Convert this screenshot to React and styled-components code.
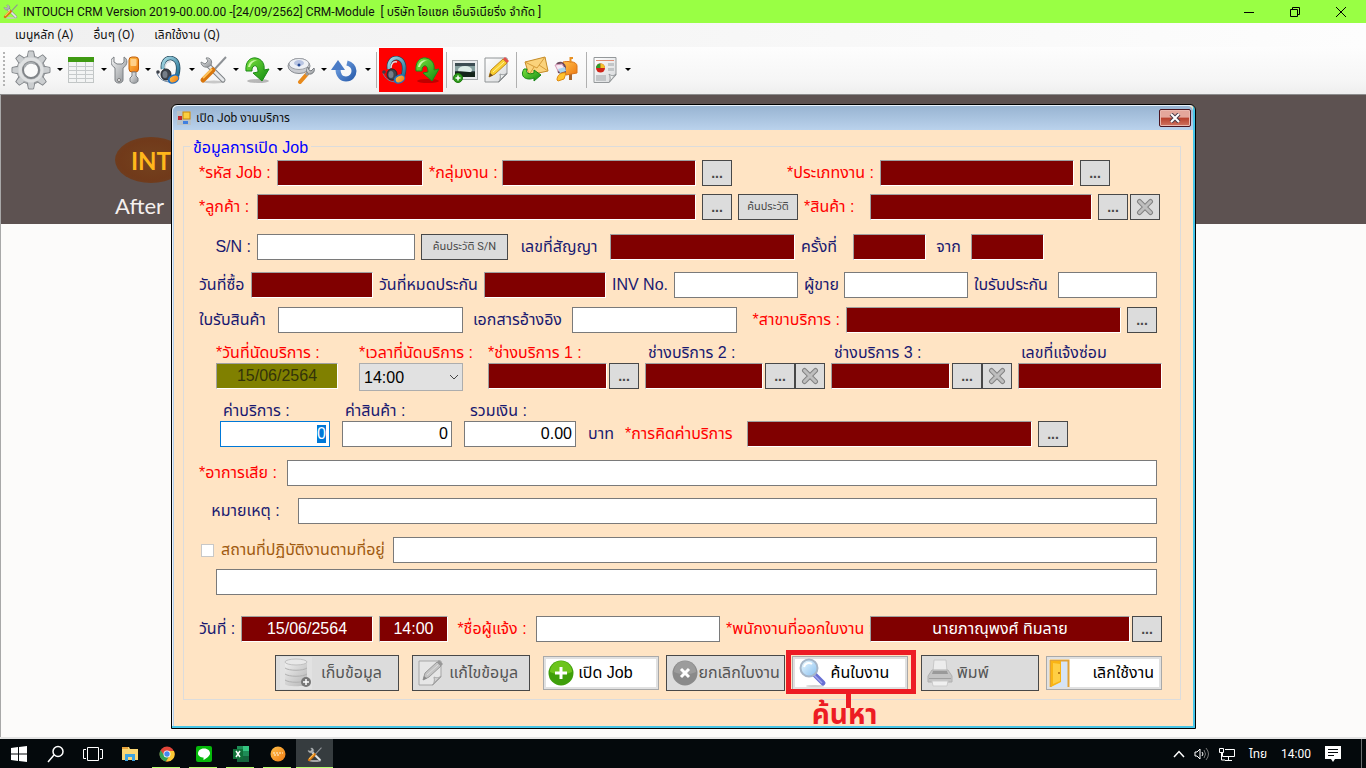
import React, { useEffect, useRef } from "react"
import styled, { createGlobalStyle, css } from "styled-components"

const GlobalStyle = createGlobalStyle`
  * { box-sizing: border-box; }
  body { margin: 0; background: #fcfbfa; font-family: "Liberation Sans", "Noto Sans Thai", sans-serif; }
  button, input, select { font: inherit; margin: 0; }
`

const uiFont = `Roboto, "Noto Sans Thai", sans-serif`

//---------------------------------------------------------
// main window

const Screen = styled.div`
  min-height: 100vh;
  display: flex;
  flex-direction: column;
`

const TitleBar = styled.header`
  display: flex;
  align-items: center;
  height: 23px;
  padding: 0 8px 0 3px;
  background: #99ff44;
  font-family: ${uiFont};
  font-size: 12px;
  color: #101010;
`

const TitleText = styled.h1`
  flex: 1;
  margin: 0 0 0 5px;
  font-size: 12px;
  font-weight: 400;
  white-space: pre;
`

const CaptionButton = styled.button`
  display: grid;
  place-items: center;
  width: 34px;
  height: 22px;
  margin-left: 12px;
  padding: 0;
  border: 0;
  background: none;
`

const MenuBar = styled.nav`
  display: flex;
  align-items: center;
  gap: 20px;
  height: 24px;
  padding: 0 15px;
  background: linear-gradient(90deg, #f0f0f0, #fdfdfd);
  font-family: ${uiFont};
  font-size: 12px;
`

const MenuLink = styled.a`
  color: #111;
  text-decoration: none;
  white-space: nowrap;
`

const ToolBar = styled.div`
  display: flex;
  align-items: center;
  height: 48px;
  padding: 0 0 2px 3px;
  background: linear-gradient(#fdfdfd, #f6f6f6 70%, #eeeeee);
  border-bottom: 1px solid #8c8c8c;
`

const Grip = styled.span`
  width: 2px;
  height: 36px;
  margin-right: 4px;
  background: repeating-linear-gradient(#b4b4b4 0 2px, transparent 2px 4px);
`

const Tool = styled.button`
  display: flex;
  align-items: center;
  justify-content: center;
  width: ${p => (p.$big ? 44 : 32)}px;
  height: 44px;
  padding: 0;
  border: 0;
  background: none;
`

const DropArrow = styled.button`
  width: 12px;
  height: 44px;
  padding: 0 3px 0 4px;
  border: 0;
  background: none;
  &::after {
    content: "";
    display: block;
    border: solid transparent;
    border-width: 3px 3px 0;
    border-top-color: #000;
  }
`

const ToolSep = styled.span`
  width: 6px;
  height: 36px;
  border-right: 1px solid #b0b0b0;
  margin-left: -2px;
  margin-right: 2px;
`

const HotTools = styled.div`
  display: flex;
  background: #ff0000;
`

const Workspace = styled.main`
  position: relative;
  flex: 1;
  padding: 9px 170px 8px 171px;
  background: linear-gradient(#5d5251 129px, #fcfbfa 129px);
  border-bottom: 2px solid #e4e4e4;
  box-shadow: inset 1px 0 0 #a8a8a8;
`

const Brand = styled.div`
  position: absolute;
  left: 115px;
  top: 42px;
  color: #f5f0ee;
  font-family: Lato, sans-serif;
  font-size: 22px;
`

const BrandMark = styled.div`
  display: grid;
  align-items: center;
  width: 72px;
  height: 46px;
  margin-bottom: 9px;
  padding-left: 16px;
  border-radius: 50%;
  background: radial-gradient(#74431f, #713a1a 60%, #674228);
  color: #ffb71b;
  font-size: 24px;
  font-weight: 700;
`

//---------------------------------------------------------
// dialog

const Dialog = styled.section`
  position: relative;
  border: 1px solid #000;
  border-radius: 6px 6px 0 0;
  background: #ffe4c4;
  box-shadow: inset -2px -2px 0 #45c5e8, inset 1px 1px 0 #e8f2fc, inset 2px 0 0 #b7d0ea;
`

const DialogTitle = styled.header`
  display: flex;
  align-items: center;
  height: 24px;
  margin: 1px 2px 0 1px;
  padding: 0 2px 0 4px;
  border-radius: 5px 5px 0 0;
  background: linear-gradient(#98b4d2, #bad2ec);
  font-family: ${uiFont};
`

const DialogName = styled.h2`
  flex: 1;
  margin: 0 0 0 5px;
  font-size: 12px;
  font-weight: 400;
  color: #101010;
`

const CloseButton = styled.button`
  display: grid;
  place-items: center;
  width: 32px;
  height: 18px;
  padding: 0;
  border: 1px solid #4a1420;
  border-radius: 2px;
  background: linear-gradient(#e4a79b 45%, #b8402c 50%, #cf7461);
  box-shadow: inset 0 0 0 1px #eab8ae;
`

const Group = styled.form`
  position: relative;
  margin: 16px 14px 28px 11px;
  padding-top: 13px;
  padding-bottom: 8px;
  border: 1px solid #dcdcdc;
`

const GroupTitle = styled.h3`
  position: absolute;
  left: 6px;
  top: -9px;
  margin: 0;
  padding: 0 3px;
  background: #ffe4c4;
  color: #0000ff;
  font-size: 16px;
  font-weight: 400;
  line-height: 20px;
`

const Row = styled.div`
  display: grid;
  grid-template-columns: ${p => p.$cols.map(c => `minmax(0, ${c}fr)`).join(" ")};
  column-gap: ${p => p.$gap || 6}px;
  align-items: ${p => p.$align || "center"};
  margin-top: ${p => p.$top || 0}px;
  padding-left: ${p => p.$indent || 15}px;
  padding-right: ${p => (p.$wide ? 18 : 23)}px;
`

const Label = styled.label`
  display: block;
  color: ${p => (p.$req ? "#ff0000" : "#191970")};
  font-size: 16px;
  line-height: 20px;
  text-align: ${p => p.$align || "left"};
  white-space: nowrap;
`

const InlineLabel = styled(Label)`
  line-height: 26px;
`

const CheckLabel = styled(Label)`
  display: flex;
  align-items: center;
  gap: 7px;
  padding-left: 2px;
  color: #a05a10;
`

const CheckBox = styled.input`
  appearance: none;
  width: 13px;
  height: 13px;
  border: 1px solid #c8c8c8;
  background: #fff;
`

const Field = styled.input`
  display: block;
  width: 100%;
  min-width: 0;
  height: 26px;
  padding: 0 3px;
  border: 1px solid #7a7a7a;
  border-radius: 0;
  background: #fff;
  color: #000;
  font-size: 16px;
  outline: 0;
  text-align: ${p => p.$align || "left"};
  &:focus { border-color: #0078d7; }
  &::selection { background: #0078d7; color: #fff; }
`

const LockedField = styled(Field)`
  border-color: #a0a0a0 #fff #fff #a0a0a0;
  background: ${p => (p.$olive ? "#808000" : "#800000")};
  color: ${p => (p.$olive ? "#33330a" : "#fff")};
  text-align: center;
`

const Picker = styled.div`
  display: flex;
  gap: ${p => (p.$gap ?? 2)}px;
`

const Stack = styled.div`
  display: flex;
  flex-direction: column;
  grid-column: ${p => p.$at || "auto"};
`

const StackLabel = styled(Label)`
  padding-left: ${p => p.$pad || 0}px;
`

const SelectWrap = styled.div`
  position: relative;
  svg { position: absolute; right: 4px; top: 10px; pointer-events: none; }
`

const Select = styled.select`
  display: block;
  appearance: none;
  width: 100%;
  height: 28px;
  padding: 0 4px;
  border: 1px solid #adadad;
  border-radius: 0;
  background: #e1e1e1;
  color: #000;
  font-size: 16px;
`

const SmallButton = styled.button`
  display: grid;
  place-items: center;
  flex: none;
  width: ${p => (p.$fill ? "100%" : "30px")};
  height: 26px;
  padding: 0;
  border: 1px solid #484848;
  background: #dcdcdc;
  color: #484848;
  font-size: ${p => (p.$fill ? 11 : 14)}px;
  font-weight: ${p => (p.$fill ? 400 : 700)};
  font-family: ${p => (p.$fill ? uiFont : "inherit")};
  line-height: 16px;
  white-space: nowrap;
`

const Actions = styled.div`
  display: grid;
  flex: 1;
  grid-template-columns: ${p => p.$cols.map(c => `minmax(0, ${c}fr)`).join(" ")};
  column-gap: 7px;
  align-items: center;
`

const enabled = css`
  height: 34px;
  border: 1px solid #a9a9a9;
  background: #fff;
  box-shadow: inset 0 0 0 2px #e1e1e1;
  color: #000;
`

const ActionButton = styled.button`
  display: flex;
  align-items: center;
  justify-content: ${p => p.$spread || "flex-start"};
  gap: ${p => p.$gap ?? 4}px;
  width: 100%;
  height: 36px;
  padding: 0 7px 0 ${p => p.$pad || 4}px;
  border: 1px solid #484848;
  background: #dcdcdc;
  color: #555;
  font-size: 16px;
  white-space: nowrap;
  ${p => p.$on && enabled}
  svg { flex: none; }
`

const Marked = styled.div`
  position: relative;
`

const MarkFrame = styled.div`
  position: absolute;
  inset: -6px -8px -4px -6px;
  border: 5px solid #ed1c24;
  pointer-events: none;
`

const MarkNote = styled.div`
  position: absolute;
  left: 0;
  right: 10px;
  top: 38px;
  padding-top: 4px;
  color: #ed1c24;
  font-size: 28px;
  font-weight: 700;
  line-height: 34px;
  text-align: center;
  pointer-events: none;
  &::before {
    content: "";
    position: absolute;
    left: 54px;
    top: 0;
    width: 5px;
    height: 14px;
    background: #ed1c24;
  }
`

//---------------------------------------------------------
// task bar

const TaskBar = styled.footer`
  display: flex;
  align-items: stretch;
  height: 30px;
  background: #04090c;
  color: #fff;
`

const Task = styled.button`
  display: grid;
  place-items: center;
  width: 37px;
  padding: 0;
  border: 0;
  background: ${p => (p.$active ? "#363c3f" : "none")};
  position: relative;
  &::after {
    content: "";
    display: ${p => (p.$running ? "block" : "none")};
    position: absolute;
    left: ${p => (p.$active ? 0 : 4)}px;
    right: ${p => (p.$active ? 0 : 5)}px;
    bottom: 0;
    height: 2px;
    background: #b4ff6e;
  }
`

const Tray = styled.div`
  display: flex;
  align-items: center;
  gap: 14px;
  margin-left: auto;
  padding-right: 4px;
  font-family: ${uiFont};
  font-size: 12px;
  white-space: nowrap;
`

const TrayIcons = styled.span`
  display: flex;
  align-items: center;
  gap: 9px;
`

const TrayEnd = styled.span`
  align-self: stretch;
  margin-left: 6px;
  border-left: 1px solid #6a6e70;
`

//---------------------------------------------------------
// icons

function Gradients() {
  const list = [
    ["gSteel", "#f4f4f4", "#8b8f93"],
    ["gGreen", "#7be33c", "#118a12"],
    ["gOrange", "#ffc04a", "#ef7a12"],
    ["gBlue", "#6f9fe0", "#2c5fae"],
    ["gBand", "#a9dbe6", "#1f6f94"],
    ["gGrey", "#efefef", "#b5b5b5"],
    ["gGlass", "#f0fbff", "#86bff0"],
    ["gPaper", "#ffffff", "#d6d8da"],
  ]
  return (
    <svg width="0" height="0" style={{ position: "absolute" }} aria-hidden="true">
      <defs>
        {list.map(([id, a, b]) => (
          <linearGradient key={id} id={id} x1="0" y1="0" x2="1" y2="1">
            <stop offset="0" stopColor={a} />
            <stop offset="1" stopColor={b} />
          </linearGradient>
        ))}
      </defs>
    </svg>
  )
}

function Icon({ size = 28, children }) {
  return <svg width={size} height={size} viewBox="0 0 28 28" aria-hidden="true">{children}</svg>
}

function GearIcon() {
  const teeth = [0, 45, 90, 135, 180, 225, 270, 315]
  return (
    <svg width="40" height="40" viewBox="0 0 40 40" aria-hidden="true">
      <g fill="url(#gSteel)" stroke="#85898d" strokeWidth="1">
        {teeth.map(a => <path key={a} d="M16 8 L17.5 1 H22.500 L24 8 Z" transform={`rotate(${a} 20 20)`} />)}
        <circle cx="20" cy="20" r="14" />
      </g>
      {teeth.map(a => <path key={a} d="M16.500 9.500 L18 2 H22 L23.500 9.500 Z" fill="#cbced0" transform={`rotate(${a} 20 20)`} />)}
      <circle cx="20" cy="20" r="11" fill="none" stroke="#dfe1e2" strokeWidth="3" />
      <circle cx="20" cy="20" r="8" fill="#fafafa" stroke="#808488" strokeWidth="2" />
      <path d="M13.500 17 A7 7 0 0 1 24 14" fill="none" stroke="#a9adb0" strokeWidth="2" />
    </svg>
  )
}

const TableIcon = () => (
  <Icon>
    <rect x="1.500" y="1.500" width="25" height="25" fill="#f3f4f4" stroke="#c2c6c6" />
    <rect x="1" y="1" width="26" height="5" fill="#3f9a12" />
    <path d="M1 10.500H27M1 14.500H27M1 18.500H27M1 22.500H27M9.500 6V27M18.500 6V27" stroke="#c6cacb" fill="none" />
  </Icon>
)

const WrenchDriverIcon = () => (
  <Icon>
    <path d="M3 1 C-1 3 -1 9 4 12 V24 C4 28 12 28 12 24 V12 C17 9 17 3 13 1 V6 L11 8 H6 L3 6 Z" fill="url(#gSteel)" stroke="#7c8084" />
    <circle cx="8" cy="24" r="1.500" fill="#fff" stroke="#777" />
    <rect x="18" y="1" width="9.500" height="15" rx="3" fill="url(#gOrange)" stroke="#c05c08" />
    <rect x="19.500" y="3" width="6" height="7" rx="1" fill="#ffd08a" />
    <path d="M21 16H25V20L27 22V25C26 28 20 28 19 25V22L21 20Z" fill="url(#gSteel)" stroke="#7c8084" />
  </Icon>
)

const HeadsetIcon = () => (
  <Icon>
    <path d="M8 13 C7 6 11 1.500 16 2 C22 3 25 9 22 20" fill="none" stroke="#24475a" strokeWidth="4.500" />
    <path d="M8 13 C7 6 11 1.500 16 2 C22 3 25 9 22 20" fill="none" stroke="url(#gBand)" strokeWidth="3" />
    <path d="M10 12 C10 7 13 5 16 6" fill="none" stroke="#d8dee2" strokeWidth="1.500" />
    <path d="M2 17 C4 23 9 26 16 26" fill="none" stroke="#6b8299" />
    <circle cx="3" cy="16" r="1.800" fill="#3b3f48" />
    <ellipse cx="11" cy="18.500" rx="5" ry="5.500" fill="#3f444c" stroke="#22262c" />
    <ellipse cx="10" cy="18.500" rx="2.500" ry="3.500" fill="#767e88" />
    <ellipse cx="18.500" cy="23" rx="6" ry="4.500" fill="#1f6fc0" transform="rotate(-25 18.500 23)" />
    <ellipse cx="19" cy="23" rx="4.500" ry="3" fill="url(#gOrange)" transform="rotate(-25 19 23)" />
  </Icon>
)

const CrossToolsIcon = ({ size }) => (
  <Icon size={size}>
    <ellipse cx="15" cy="26" rx="11" ry="1.500" fill="#c8c8c8" />
    <path d="M9 9 L24 24" stroke="#7d8184" strokeWidth="5" strokeLinecap="round" />
    <path d="M9 9 L24 24" stroke="#e6e8ea" strokeWidth="3" strokeLinecap="round" />
    <path d="M2 6 C2 11 8 13 12 9 C14 5 11 1 7 2 L9 5 L6 8 Z" fill="url(#gSteel)" stroke="#84888b" />
    <path d="M27 1 L14 15" stroke="#8e9296" strokeWidth="2" />
    <path d="M14 14 L4 24" stroke="#d9760c" strokeWidth="5" strokeLinecap="round" />
    <path d="M13 13 L4 22" stroke="#ffc45c" strokeWidth="2" />
  </Icon>
)

const GreenArrowIcon = () => (
  <Icon>
    <ellipse cx="15" cy="25" rx="11" ry="2" fill="#000" opacity="0.25" />
    <path d="M3 15 C2 6 7 1 13 2 C19 3 22 8 21 14 L26 13 L19 25 L10 17 L15 16 C15 11 13 9 11 10 C9 11 9 13 9 15 Z" fill="url(#gGreen)" stroke="#1a8a16" />
    <path d="M5 11 C6 5 11 3 15 5 C12 4 8 7 7 11 Z" fill="#c9f7a4" />
  </Icon>
)

const InspectIcon = () => (
  <Icon>
    <ellipse cx="12" cy="10" rx="11" ry="7.500" fill="#c9cbd0" stroke="#888c92" />
    <ellipse cx="12" cy="8" rx="10" ry="5.500" fill="#eef0f5" stroke="#9fa2a8" />
    <ellipse cx="12" cy="7" rx="5" ry="3" fill="#b8c4e2" />
    <circle cx="12" cy="9" r="1.500" fill="#264a96" />
    <path d="M13 26 L20 18" stroke="#e88a1c" strokeWidth="4" strokeLinecap="round" />
    <path d="M19 19 L22 16" stroke="#9a9ea2" strokeWidth="3" />
    <path d="M21 11 C18 14 20 19 24 18 C27 17 28 14 27 12 L24 15 L22 14 Z" fill="url(#gSteel)" stroke="#777b80" />
  </Icon>
)

const SyncIcon = () => (
  <Icon>
    <path d="M7 13 C7 20 11 23 15 23 C20 23 23 19 23 15 C23 11 20 8 16 7" fill="none" stroke="url(#gBlue)" strokeWidth="5" />
    <path d="M0 14 L7 4 L14 14 Z" fill="#4a7bc6" />
  </Icon>
)

const PictureIcon = () => (
  <Icon>
    <rect x="1.500" y="4.500" width="25" height="19" fill="#e9ebec" stroke="#a5a8aa" />
    <rect x="4" y="7" width="20" height="14" fill="#3c4c52" />
    <path d="M4 10H24V15H4Z" fill="#86a09f" />
    <ellipse cx="14" cy="14" rx="7" ry="4" fill="#dcebe6" />
    <path d="M4 16C10 14 18 17 24 16V21H4Z" fill="#14241a" />
    <circle cx="7" cy="22" r="4.500" fill="#2f9c1c" stroke="#1f7a10" />
    <path d="M7 19.500V24.500M4.500 22H9.500" stroke="#fff" strokeWidth="1.500" />
  </Icon>
)

const NoteIcon = ({ grey }) => (
  <Icon>
    <path d="M2 2H24V18L16 26H2Z" fill={grey ? "#e6e6e6" : "url(#gPaper)"} stroke={grey ? "#a6a6a6" : "#909496"} />
    <path d="M24 17C21 20 17 18 17 18C18 22 17 25 15 26Z" fill={grey ? "#d0d0d0" : "#eceeee"} stroke={grey ? "#a6a6a6" : "#909496"} />
    <path d="M6 21 L8 14 L20 3 L24 7 L12 18 Z" fill={grey ? "#c4c4c4" : "#f8cf31"} stroke={grey ? "#999" : "#c38a15"} />
    <path d="M20 3L22 1L26 5L24 7Z" fill={grey ? "#989898" : "#e2524e"} />
    <path d="M6 21L7 17L10 19.500Z" fill={grey ? "#888" : "#6c4a20"} />
    <path d="M10 16L21 6" stroke={grey ? "#dedede" : "#fff0a0"} />
  </Icon>
)

const MailIcon = () => (
  <Icon>
    <path d="M4 6 L24 1 L27 15 L8 19 Z" fill="#fbd37b" stroke="#c48a25" />
    <path d="M4 6 L16 12 L24 1 M8 19 L13 11 M27 15 L18 9" fill="none" stroke="#d59b38" />
    <path d="M3 13 C-2 21 6 25 13 22 V25 L20 19 L13 14 V17 C8 19 4 17 6 13 Z" fill="url(#gGreen)" stroke="#168414" />
  </Icon>
)

const MailboxIcon = () => (
  <Icon>
    <path d="M16 16V24H19V16Z" fill="#a8662c" />
    <path d="M10 6 C14 5 24 5 24 10 V17 L13 19 Z" fill="url(#gOrange)" stroke="#d8741a" />
    <path d="M3 8 C6 4 12 6 13 11 V19 L5 17 Z" fill="#6b4a5c" />
    <path d="M2 9 L9 8 L12 13 L5 15 Z" fill="#f6eaf4" stroke="#d59ab8" />
    <path d="M5 13L12 11L13 15L7 17Z" fill="#a8d4ee" />
    <path d="M4 24 C4 19 8 16 13 17 L11 23 L5 25 Z" fill="#ffc42e" stroke="#df8a12" />
    <path d="M17.500 7V2H20" stroke="#e79022" strokeWidth="2" fill="none" />
  </Icon>
)

const ReportIcon = () => (
  <Icon>
    <path d="M3 1.500H25V19L18 26.500H3Z" fill="url(#gPaper)" stroke="#94989a" />
    <path d="M25 18C22 21 19 19 18 18C20 22 19 25 18 26.500Z" fill="#eef0f0" stroke="#94989a" />
    <path d="M5 4.500H23" stroke="#e08c74" />
    <circle cx="9.500" cy="12" r="4.500" fill="#cf2418" />
    <path d="M9.500 12V7.500A4.500 4.500 0 0 0 5 12Z" fill="#2f9e28" />
    <path d="M9.500 12H14A4.500 4.500 0 0 0 9.500 7.500Z" fill="#f2c22c" />
    <path d="M17 7H23V10H17ZM17 12H23V15H17ZM5 19H15V25H5Z" fill="#c2c5c7" />
  </Icon>
)

const XIcon = () => (
  <svg width="18" height="18" viewBox="0 0 18 18" aria-hidden="true">
    <path d="M3.500 3.500 L14.500 14.500 M14.500 3.500 L3.500 14.500" stroke="#828282" strokeWidth="5" strokeLinecap="round" />
    <path d="M3.500 3.500 L14.500 14.500 M14.500 3.500 L3.500 14.500" stroke="#bebebe" strokeWidth="3" strokeLinecap="round" />
  </svg>
)

const DatabaseIcon = () => (
  <svg width="32" height="32" viewBox="0 0 32 32" aria-hidden="true">
    <rect width="32" height="32" fill="#e2e2e2" />
    <path d="M5 5V27C5 30 27 30 27 27V5Z" fill="url(#gGrey)" />
    <path d="M5 11C9 14 23 14 27 11M5 17C9 20 23 20 27 17M5 23C9 26 23 26 27 23" fill="none" stroke="#b0b0b0" />
    <ellipse cx="16" cy="5" rx="11" ry="3" fill="#e8e8e8" stroke="#c0c0c0" />
    <circle cx="26" cy="25" r="5" fill="#767676" />
    <path d="M26 22V28M23 25H29" stroke="#fff" strokeWidth="1.500" />
  </svg>
)

const RoundIcon = ({ grey }) => (
  <svg width="26" height="26" viewBox="0 0 26 26" aria-hidden="true">
    <circle cx="13" cy="13" r="12.500" fill={grey ? "#8a8a8a" : "#3f9f0a"} />
    <path d="M2 12A11 11 0 0 1 24 12C17 15 9 15 2 12Z" fill={grey ? "#9c9c9c" : "#6cc41c"} />
    {grey
      ? <path d="M9 9L17 17M17 9L9 17" stroke="#fff" strokeWidth="3" />
      : <path d="M13 7V19M7 13H19" stroke="#fff" strokeWidth="3" />}
  </svg>
)

const SearchDocIcon = () => (
  <svg width="28" height="30" viewBox="0 0 28 30" aria-hidden="true">
    <ellipse cx="16" cy="28" rx="9" ry="1" fill="#d2d2d2" />
    <path d="M16 17L24 25" stroke="#6870d4" strokeWidth="5" strokeLinecap="round" />
    <path d="M15 17L23 25" stroke="#a2a8ee" strokeWidth="1.500" />
    <circle cx="10" cy="10" r="8.500" fill="url(#gGlass)" stroke="#a6b6c8" strokeWidth="2" />
    <path d="M5 9C6 5 10 4 13 6" stroke="#fff" strokeWidth="2" fill="none" />
  </svg>
)

const PrinterIcon = () => (
  <svg width="26" height="28" viewBox="0 0 26 28" aria-hidden="true">
    <path d="M7 1H19L20 12H6Z" fill="#ececec" stroke="#c8c8c8" />
    <path d="M5 11H21L25 17V23H1V17Z" fill="#c4c4c4" stroke="#b0b0b0" />
    <path d="M6 12H20L21 15H5Z" fill="#9a9a9a" />
    <path d="M2 19H24V20H2Z" fill="#a0a0a0" />
    <path d="M5 22H21L20 27H6Z" fill="#f0f0f0" stroke="#cccccc" />
  </svg>
)

const DoorIcon = () => (
  <svg width="22" height="28" viewBox="0 0 22 28" aria-hidden="true">
    <path d="M1.500 28V1.500H19.500V28" fill="#d6e4f6" stroke="#e0a238" strokeWidth="2" />
    <path d="M2 2H12V23L2 28Z" fill="#f9b414" />
    <path d="M4 4L11 5V22L4 25Z" fill="#ffcf45" />
    <circle cx="10" cy="14" r="1" fill="#a8640c" />
  </svg>
)

const FormIcon = () => (
  <svg width="14" height="14" viewBox="0 0 14 14" aria-hidden="true">
    <rect width="14" height="14" fill="#b9c2c9" />
    <rect x="6" y="1" width="7" height="7" fill="#fbcf3f" stroke="#c8880c" />
    <rect x="1" y="5" width="4" height="4" fill="#c1272d" />
    <rect x="6" y="10" width="5" height="3" fill="#3f7fe0" />
  </svg>
)

const Chevron = () => (
  <svg width="10" height="8" viewBox="0 0 10 8" aria-hidden="true">
    <path d="M1 2L5 6L9 2" fill="none" stroke="#444" />
  </svg>
)

//---------------------------------------------------------

const menuTools = [
  ["รายการ", TableIcon],
  ["เครื่องมือ", WrenchDriverIcon],
  ["บริการลูกค้า", HeadsetIcon],
  ["ซ่อม", CrossToolsIcon],
  ["ส่งต่อ", GreenArrowIcon],
  ["ตรวจสอบ", InspectIcon],
  ["ปรับปรุง", SyncIcon],
]

function AppToolBar() {
  return (
    <ToolBar role="toolbar">
      <Grip />
      <Tool $big aria-label="ตั้งค่า"><GearIcon /></Tool>
      <DropArrow aria-label="เมนูตั้งค่า" />
      {menuTools.map(([name, Pic]) => (
        <React.Fragment key={name}>
          <Tool aria-label={name}><Pic /></Tool>
          <DropArrow aria-label={"เมนู" + name} />
        </React.Fragment>
      ))}
      <ToolSep />
      <HotTools>
        <Tool aria-label="เปิด Job"><HeadsetIcon /></Tool>
        <Tool aria-label="ปิด Job"><GreenArrowIcon /></Tool>
      </HotTools>
      <ToolSep />
      <Tool aria-label="รูปภาพ"><PictureIcon /></Tool>
      <Tool aria-label="บันทึก"><NoteIcon /></Tool>
      <ToolSep />
      <Tool aria-label="ส่งเมล"><MailIcon /></Tool>
      <Tool aria-label="กล่องเมล"><MailboxIcon /></Tool>
      <ToolSep />
      <Tool aria-label="รายงาน"><ReportIcon /></Tool>
      <DropArrow aria-label="เมนูรายงาน" />
    </ToolBar>
  )
}

function More() {
  return <SmallButton type="button">...</SmallButton>
}

function Clear() {
  return <SmallButton type="button" aria-label="ล้าง"><XIcon /></SmallButton>
}

function Technician({ id, label, req, clear }) {
  return (
    <Stack>
      <StackLabel htmlFor={id} $req={req} $pad={req ? 0 : 3}>{label}</StackLabel>
      <Picker $gap={2}>
        <LockedField id={id} readOnly />
        <Picker $gap={0}>
          <More />
          {clear && <Clear />}
        </Picker>
      </Picker>
    </Stack>
  )
}

function JobForm() {
  const fee = useRef(null)

  useEffect(() => {
    fee.current.focus()
    fee.current.select()
  }, [])

  return (
    <Group onSubmit={e => e.preventDefault()}>
      <GroupTitle>ข้อมูลการเปิด Job</GroupTitle>

      <Row $wide $cols={[72, 146, 67, 194, 30, 136, 194, 30, 46]}>
        <Label htmlFor="job" $req>*รหัส Job :</Label>
        <LockedField id="job" readOnly />
        <Label htmlFor="team" $req>*กลุ่มงาน :</Label>
        <LockedField id="team" readOnly />
        <More />
        <Label htmlFor="kind" $req $align="right">*ประเภทงาน :</Label>
        <LockedField id="kind" readOnly />
        <More />
      </Row>

      <Row $wide $top={8} $cols={[52, 439, 30, 60, 60, 222, 64]}>
        <Label htmlFor="customer" $req>*ลูกค้า :</Label>
        <LockedField id="customer" readOnly />
        <More />
        <SmallButton type="button" $fill>ค้นประวัติ</SmallButton>
        <Label htmlFor="product" $req>*สินค้า :</Label>
        <LockedField id="product" readOnly />
        <Picker><More /><Clear /></Picker>
      </Row>

      <Row $wide $top={14} $cols={[52, 158, 87, 90, 185, 46, 73, 33, 73, 112]}>
        <Label htmlFor="sn" $align="right">S/N :</Label>
        <Field id="sn" />
        <SmallButton type="button" $fill>ค้นประวัติ S/N</SmallButton>
        <Label htmlFor="contract" $align="center">เลขที่สัญญา</Label>
        <LockedField id="contract" readOnly />
        <Label htmlFor="visit">ครั้งที่</Label>
        <LockedField id="visit" readOnly />
        <Label htmlFor="visits" $align="center">จาก</Label>
        <LockedField id="visits" readOnly />
      </Row>

      <Row $top={12} $cols={[46, 122, 99, 122, 56, 124, 34, 124, 78, 99]}>
        <Label htmlFor="bought">วันที่ซื้อ</Label>
        <LockedField id="bought" readOnly />
        <Label htmlFor="expire">วันที่หมดประกัน</Label>
        <LockedField id="expire" readOnly />
        <Label htmlFor="inv" $align="center">INV No.</Label>
        <Field id="inv" />
        <Label htmlFor="seller">ผู้ขาย</Label>
        <Field id="seller" />
        <Label htmlFor="warranty">ใบรับประกัน</Label>
        <Field id="warranty" />
      </Row>

      <Row $top={9} $cols={[73, 185, 97, 165, 97, 275, 30]}>
        <Label htmlFor="receipt">ใบรับสินค้า</Label>
        <Field id="receipt" />
        <Label htmlFor="refdoc" $align="center">เอกสารอ้างอิง</Label>
        <Field id="refdoc" />
        <Label htmlFor="branch" $req $align="right">*สาขาบริการ :</Label>
        <LockedField id="branch" readOnly />
        <More />
      </Row>

      <Row $wide $top={10} $indent={32} $align="start" $cols={[122, 9, 104, 13, 151, 180, 181, 144]}>
        <Stack>
          <Label htmlFor="apptDate" $req>*วันที่นัดบริการ :</Label>
          <LockedField id="apptDate" $olive readOnly value="15/06/2564" />
        </Stack>
        <Stack $at="3">
          <Label htmlFor="apptTime" $req>*เวลาที่นัดบริการ :</Label>
          <SelectWrap>
            <Select id="apptTime" defaultValue="14:00"><option>14:00</option></Select>
            <Chevron />
          </SelectWrap>
        </Stack>
        <Stack $at="5">
          <Technician id="tech1" label="*ช่างบริการ 1 :" req />
        </Stack>
        <Technician id="tech2" label="ช่างบริการ 2 :" clear />
        <Technician id="tech3" label="ช่างบริการ 3 :" clear />
        <Stack>
          <StackLabel htmlFor="repairNo" $pad={3}>เลขที่แจ้งซ่อม</StackLabel>
          <LockedField id="repairNo" readOnly />
        </Stack>
      </Row>

      <Row $top={10} $gap={12} $indent={36} $align="end" $cols={[110, 110, 112, 25, 110, 321, 77]}>
        <Stack>
          <StackLabel htmlFor="fee" $pad={3}>ค่าบริการ :</StackLabel>
          <Field id="fee" ref={fee} defaultValue="0" $align="right" />
        </Stack>
        <Stack>
          <StackLabel htmlFor="goods" $pad={3}>ค่าสินค้า :</StackLabel>
          <Field id="goods" defaultValue="0" $align="right" />
        </Stack>
        <Stack>
          <StackLabel htmlFor="total" $pad={6}>รวมเงิน :</StackLabel>
          <Field id="total" defaultValue="0.00" $align="right" />
        </Stack>
        <InlineLabel as="span">บาท</InlineLabel>
        <InlineLabel htmlFor="charge" $req>*การคิดค่าบริการ</InlineLabel>
        <Picker $gap={6}>
          <LockedField id="charge" readOnly />
          <More />
        </Picker>
      </Row>

      <Row $top={13} $cols={[82, 870]}>
        <Label htmlFor="symptom" $req>*อาการเสีย :</Label>
        <Field id="symptom" />
      </Row>

      <Row $top={12} $cols={[93, 859]}>
        <Label htmlFor="remark" $align="center">หมายเหตุ :</Label>
        <Field id="remark" />
      </Row>

      <Row $top={13} $cols={[188, 764]}>
        <CheckLabel><CheckBox type="checkbox" />สถานที่ปฏิบัติงานตามที่อยู่</CheckLabel>
        <Field aria-label="สถานที่ปฏิบัติงาน" />
      </Row>

      <Row $top={6} $indent={32} $cols={[941]}>
        <Field aria-label="ที่อยู่" />
      </Row>

      <Row $wide $top={21} $cols={[36, 132, 69, 76, 184, 138, 292]}>
        <Label htmlFor="docDate">วันที่ :</Label>
        <LockedField id="docDate" readOnly value="15/06/2564" />
        <LockedField aria-label="เวลา" readOnly value="14:00" />
        <Label htmlFor="caller" $req $align="center">*ชื่อผู้แจ้ง :</Label>
        <Field id="caller" />
        <Label htmlFor="staff" $req $align="right">*พนักงานที่ออกใบงาน :</Label>
        <Picker>
          <LockedField id="staff" readOnly value="นายภาณุพงศ์ ทิมลาย" />
          <More />
        </Picker>
      </Row>

      <Row $wide $top={13} $gap={13} $indent={91} $cols={[124, 118, 364, 241]}>
        <ActionButton type="button" $gap={9}><DatabaseIcon />เก็บข้อมูล</ActionButton>
        <ActionButton type="button"><NoteIcon grey />แก้ไขข้อมูล</ActionButton>
        <Actions $cols={[116, 118, 116]}>
          <ActionButton type="button" $on><RoundIcon />เปิด Job</ActionButton>
          <ActionButton type="button" $pad={5} $gap={0}><RoundIcon grey />ยกเลิกใบงาน</ActionButton>
          <Marked>
            <ActionButton type="button" $on $pad={6}><SearchDocIcon />ค้นใบงาน</ActionButton>
            <MarkFrame />
            <MarkNote>ค้นหา</MarkNote>
          </Marked>
        </Actions>
        <Actions $cols={[118, 116]}>
          <ActionButton type="button" $pad={5}><PrinterIcon />พิมพ์</ActionButton>
          <ActionButton type="button" $on $pad={2} $spread="space-between"><DoorIcon />เลิกใช้งาน</ActionButton>
        </Actions>
      </Row>
    </Group>
  )
}

function WindowsTaskBar() {
  return (
    <TaskBar>
      <Task aria-label="Start">
        <svg width="16" height="16" viewBox="0 0 16 16"><path d="M0 2L7 1V7.500H0ZM8 1L16 0V7.500H8ZM0 8.500H7V15L0 14ZM8 8.500H16V16L8 15Z" fill="#fff" /></svg>
      </Task>
      <Task aria-label="Search">
        <svg width="18" height="18" viewBox="0 0 18 18"><circle cx="11" cy="6.500" r="5" fill="none" stroke="#fff" strokeWidth="1.500" /><path d="M7 10L1 17" stroke="#fff" strokeWidth="1.500" /></svg>
      </Task>
      <Task aria-label="Task view">
        <svg width="20" height="16" viewBox="0 0 20 16"><path d="M4.500 1.500H15.500V14.500H4.500ZM3 3.500H.5V12.500H3M17 3.500H19.500V12.500H17" fill="none" stroke="#fff" /></svg>
      </Task>
      <Task aria-label="File Explorer">
        <svg width="18" height="16" viewBox="0 0 18 16"><path d="M1 1H8L9 3H17V14H1Z" fill="#fbd774" /><path d="M1 1H7V3H1Z" fill="#e8a33c" /><path d="M4 15V8H14V15H11V11H7V15Z" fill="#3fa3e0" /></svg>
      </Task>
      <Task $running aria-label="Chrome">
        <svg width="16" height="16" viewBox="0 0 16 16">
          <circle cx="8" cy="8" r="7.500" fill="#e2463a" />
          <path d="M1.500 4.200A7.500 7.500 0 0 0 7 15.400L10.500 9.500L5 9Z" fill="#34a352" />
          <path d="M8 5H15A7.500 7.500 0 0 1 7 15.500L11 9Z" fill="#fcc934" />
          <circle cx="8" cy="8" r="3.500" fill="#fff" /><circle cx="8" cy="8" r="2.700" fill="#4787ee" />
        </svg>
      </Task>
      <Task $running aria-label="LINE">
        <svg width="16" height="16" viewBox="0 0 16 16"><rect width="16" height="16" rx="2" fill="#05b90a" /><path d="M8 2.500C4 2.500 2 5 2 7.500C2 10 5 11.500 7.500 11.500V14C10 12.500 14 10 14 7.500C14 5 12 2.500 8 2.500Z" fill="#fff" /></svg>
      </Task>
      <Task $running aria-label="Excel">
        <svg width="16" height="16" viewBox="0 0 16 16"><rect x="4" width="12" height="16" fill="#1e8c56" /><path d="M10 0H16V5H10Z" fill="#35c481" /><path d="M4 10H16V16H4Z" fill="#14653c" /><rect y="3" width="10" height="10" fill="#107038" /><path d="M3 5L7 11M7 5L3 11" stroke="#fff" strokeWidth="1.500" /></svg>
      </Task>
      <Task $running aria-label="INTOUCH">
        <svg width="16" height="16" viewBox="0 0 16 16"><circle cx="8" cy="8" r="7.500" fill="url(#gOrange)" /><path d="M3 7H13M4 9H9" stroke="#fff3d8" strokeDasharray="2 1" /></svg>
      </Task>
      <Task $running $active aria-label="INTOUCH CRM"><CrossToolsIcon size={15} /></Task>
      <Tray>
        <TrayIcons>
          <svg width="12" height="8" viewBox="0 0 12 8"><path d="M1 7L6 1.500L11 7" fill="none" stroke="#fff" strokeWidth="1.500" /></svg>
          <svg width="16" height="14" viewBox="0 0 16 14" fill="none" stroke="#fff"><path d="M1 5H3L6 2V12L3 9H1Z" /><path d="M8 5Q10 7 8 9" /><path d="M10 3Q13 7 10 11M12 1Q17 7 12 13" stroke="#777" /></svg>
          <svg width="16" height="14" viewBox="0 0 16 14" fill="none" stroke="#fff"><path d="M6 2.500H15.500V9.500H3.500V6M9.500 10V13M6 13.500H13M.5 1.500H4.500V5.500H.5ZM2.500 5V13H6" /></svg>
        </TrayIcons>
        <span>ไทย</span>
        <span>14:00</span>
        <svg width="16" height="16" viewBox="0 0 16 16"><path d="M0 0H16V13H10L8 16L6 13H0Z" fill="#fff" /><path d="M3 3.500H13M3 6.500H13M3 9.500H9" stroke="#04090c" /></svg>
        <TrayEnd />
      </Tray>
    </TaskBar>
  )
}

export default function App() {
  return (
    <Screen>
      <GlobalStyle />
      <Gradients />
      <TitleBar>
        <CrossToolsIcon size={15} />
        <TitleText>{"INTOUCH CRM Version 2019-00.00.00 -[24/09/2562] CRM-Module  [ บริษัท ไอแซค เอ็นจิเนียริ่ง จำกัด ]"}</TitleText>
        <CaptionButton aria-label="Minimize"><svg width="10" height="10"><path d="M0 5.500H10" stroke="#000" /></svg></CaptionButton>
        <CaptionButton aria-label="Restore"><svg width="10" height="10" fill="none" stroke="#000"><path d="M.5 2.500H7.500V9.500H.5ZM2.500 2V.5H9.500V7.500H8" /></svg></CaptionButton>
        <CaptionButton aria-label="Close"><svg width="10" height="10"><path d="M0 0L10 10M10 0L0 10" stroke="#000" /></svg></CaptionButton>
      </TitleBar>
      <MenuBar>
        <MenuLink href="#main">เมนูหลัก (A)</MenuLink>
        <MenuLink href="#other">อื่นๆ (O)</MenuLink>
        <MenuLink href="#quit">เลิกใช้งาน (Q)</MenuLink>
      </MenuBar>
      <AppToolBar />
      <Workspace>
        <Brand>
          <BrandMark>INT</BrandMark>
          After
        </Brand>
        <Dialog>
          <DialogTitle>
            <FormIcon />
            <DialogName>เปิด Job งานบริการ</DialogName>
            <CloseButton type="button" aria-label="ปิด">
              <svg width="12" height="10" viewBox="0 0 12 10"><path d="M2 1L10 9M10 1L2 9" stroke="#4a3b48" strokeWidth="4" /><path d="M2 1L10 9M10 1L2 9" stroke="#fff" strokeWidth="2" /></svg>
            </CloseButton>
          </DialogTitle>
          <JobForm />
        </Dialog>
      </Workspace>
      <WindowsTaskBar />
    </Screen>
  )
}
